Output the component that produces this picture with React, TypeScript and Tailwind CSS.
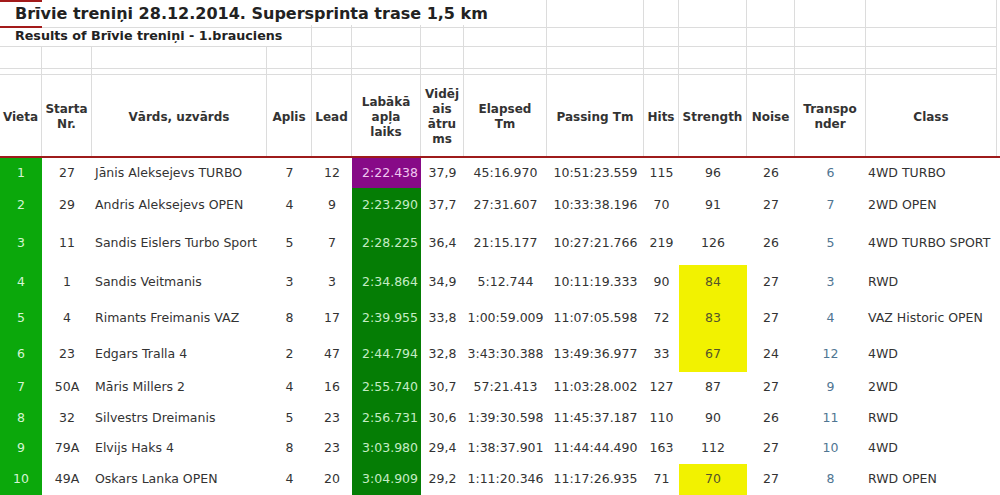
const COLS =
  "grid grid-cols-[42px_50px_175px_45px_40px_69px_43px_83px_97px_35px_68px_48px_71px_131px]";

type Result = {
  place: number;
  nr: string;
  name: string;
  laps: number;
  lead: number;
  best: string;
  avg: string;
  elapsed: string;
  passing: string;
  hits: number;
  strength: number;
  noise: number;
  transponder: number;
  cls: string;
  height: string;
  weak?: boolean;
};

const results: Result[] = [
  { place: 1, nr: "27", name: "Jānis Aleksejevs TURBO", laps: 7, lead: 12, best: "2:22.438", avg: "37,9", elapsed: "45:16.970", passing: "10:51:23.559", hits: 115, strength: 96, noise: 26, transponder: 6, cls: "4WD TURBO", height: "h-[30px]" },
  { place: 2, nr: "29", name: "Andris Aleksejevs OPEN", laps: 4, lead: 9, best: "2:23.290", avg: "37,7", elapsed: "27:31.607", passing: "10:33:38.196", hits: 70, strength: 91, noise: 27, transponder: 7, cls: "2WD OPEN", height: "h-[34px]" },
  { place: 3, nr: "11", name: "Sandis Eislers Turbo Sport", laps: 5, lead: 7, best: "2:28.225", avg: "36,4", elapsed: "21:15.177", passing: "10:27:21.766", hits: 219, strength: 126, noise: 26, transponder: 5, cls: "4WD TURBO SPORT", height: "h-[43px]" },
  { place: 4, nr: "1", name: "Sandis Veitmanis", laps: 3, lead: 3, best: "2:34.864", avg: "34,9", elapsed: "5:12.744", passing: "10:11:19.333", hits: 90, strength: 84, noise: 27, transponder: 3, cls: "RWD", height: "h-[35px]", weak: true },
  { place: 5, nr: "4", name: "Rimants Freimanis VAZ", laps: 8, lead: 17, best: "2:39.955", avg: "33,8", elapsed: "1:00:59.009", passing: "11:07:05.598", hits: 72, strength: 83, noise: 27, transponder: 4, cls: "VAZ Historic OPEN", height: "h-[36px]", weak: true },
  { place: 6, nr: "23", name: "Edgars Tralla 4", laps: 2, lead: 47, best: "2:44.794", avg: "32,8", elapsed: "3:43:30.388", passing: "13:49:36.977", hits: 33, strength: 67, noise: 24, transponder: 12, cls: "4WD", height: "h-[36px]", weak: true },
  { place: 7, nr: "50A", name: "Māris Millers 2", laps: 4, lead: 16, best: "2:55.740", avg: "30,7", elapsed: "57:21.413", passing: "11:03:28.002", hits: 127, strength: 87, noise: 27, transponder: 9, cls: "2WD", height: "h-[31px]" },
  { place: 8, nr: "32", name: "Silvestrs Dreimanis", laps: 5, lead: 23, best: "2:56.731", avg: "30,6", elapsed: "1:39:30.598", passing: "11:45:37.187", hits: 110, strength: 90, noise: 26, transponder: 11, cls: "RWD", height: "h-[30px]" },
  { place: 9, nr: "79A", name: "Elvijs Haks 4", laps: 8, lead: 23, best: "3:03.980", avg: "29,4", elapsed: "1:38:37.901", passing: "11:44:44.490", hits: 163, strength: 112, noise: 27, transponder: 10, cls: "4WD", height: "h-[31px]" },
  { place: 10, nr: "49A", name: "Oskars Lanka OPEN", laps: 4, lead: 20, best: "3:04.909", avg: "29,2", elapsed: "1:11:20.346", passing: "11:17:26.935", hits: 71, strength: 70, noise: 27, transponder: 8, cls: "RWD OPEN", height: "h-[31px]", weak: true },
];

const headers: string[][] = [
  ["Vieta"],
  ["Starta", "Nr."],
  ["Vārds, uzvārds"],
  ["Aplis"],
  ["Lead"],
  ["Labākā", "apļa", "laiks"],
  ["Vidēj", "ais", "ātru", "ms"],
  ["Elapsed", "Tm"],
  ["Passing Tm"],
  ["Hits"],
  ["Strength"],
  ["Noise"],
  ["Transpo", "nder"],
  ["Class"],
];

const line = "border-r border-b border-[#dcdcdc]";

function EmptyRow({ height }: { height: string }) {
  return (
    <div className={`${COLS} ${height}`}>
      {headers.map((_, i) => (
        <div key={i} className={line} />
      ))}
    </div>
  );
}

export default function App() {
  return (
    <div className="w-[1000px] h-[495px] overflow-hidden bg-white text-[#333] font-['DejaVu_Sans',Verdana,sans-serif] text-[12.5px]">
      {/* title rows */}
      <div className={`${COLS} h-[25px]`}>
        <div className="border-y-2 border-[#a31a1a] flex items-center">
          <span className="pl-[15px] whitespace-nowrap font-bold text-[16px] text-[#222]">
            Brīvie treniņi 28.12.2014. Supersprinta trase 1,5 km
          </span>
        </div>
        {[1, 2, 3, 4, 5, 6].map((i) => (
          <div key={i} className="border-b border-[#dcdcdc]" />
        ))}
        {[7, 8, 9, 10, 11, 12, 13].map((i) => (
          <div key={i} className={line} />
        ))}
      </div>
      <div className={`${COLS} h-[22px]`}>
        <div className="border-b border-[#dcdcdc] flex items-center">
          <span className="pl-[15px] whitespace-nowrap font-bold text-[12.7px] text-[#222]">
            Results of Brīvie treniņi - 1.brauciens
          </span>
        </div>
        <div className="border-b border-[#dcdcdc]" />
        <div className="border-b border-[#dcdcdc]" />
        {[3, 4, 5, 6, 7, 8, 9, 10, 11, 12, 13].map((i) => (
          <div key={i} className={line} />
        ))}
      </div>
      <EmptyRow height="h-[22px]" />
      <EmptyRow height="h-[6px]" />

      {/* header */}
      <div className={`${COLS} h-[83px] border-b-2 border-[#9e1b1b]`}>
        {headers.map((h, i) => (
          <div
            key={i}
            className="border-r border-[#dcdcdc] flex flex-col items-center justify-center pt-[3px] text-center font-bold text-[12px] leading-[15px]"
          >
            {h.map((part) => (
              <span key={part} className="whitespace-nowrap">
                {part}
              </span>
            ))}
          </div>
        ))}
      </div>

      {/* results */}
      {results.map((r) => (
        <div key={r.place} className={`${COLS} ${r.height} items-stretch`}>
          <div className="bg-[#0ba80b] text-[#d4f5d4] flex items-center justify-center">
            {r.place}
          </div>
          <div className="flex items-center justify-center">{r.nr}</div>
          <div className="flex items-center pl-[3px] whitespace-nowrap">{r.name}</div>
          <div className="flex items-center justify-center">{r.laps}</div>
          <div className="flex items-center justify-center">{r.lead}</div>
          <div
            className={`flex items-center justify-end pr-[3px] ${
              r.place === 1
                ? "bg-[#870a87] text-[#f1c8f1]"
                : "bg-[#057d05] text-[#c4ecc4]"
            }`}
          >
            {r.best}
          </div>
          <div className="flex items-center justify-center">{r.avg}</div>
          <div className="flex items-center justify-center whitespace-nowrap">{r.elapsed}</div>
          <div className="flex items-center justify-center">{r.passing}</div>
          <div className="flex items-center justify-center">{r.hits}</div>
          <div
            className={`flex items-center justify-center ${
              r.weak ? "bg-[#f2f200] text-[#55552a]" : ""
            }`}
          >
            {r.strength}
          </div>
          <div className="flex items-center justify-center">{r.noise}</div>
          <div className="flex items-center justify-center text-[#4f7592]">
            {r.transponder}
          </div>
          <div className="flex items-center pl-[2px] whitespace-nowrap">{r.cls}</div>
        </div>
      ))}
    </div>
  );
}
